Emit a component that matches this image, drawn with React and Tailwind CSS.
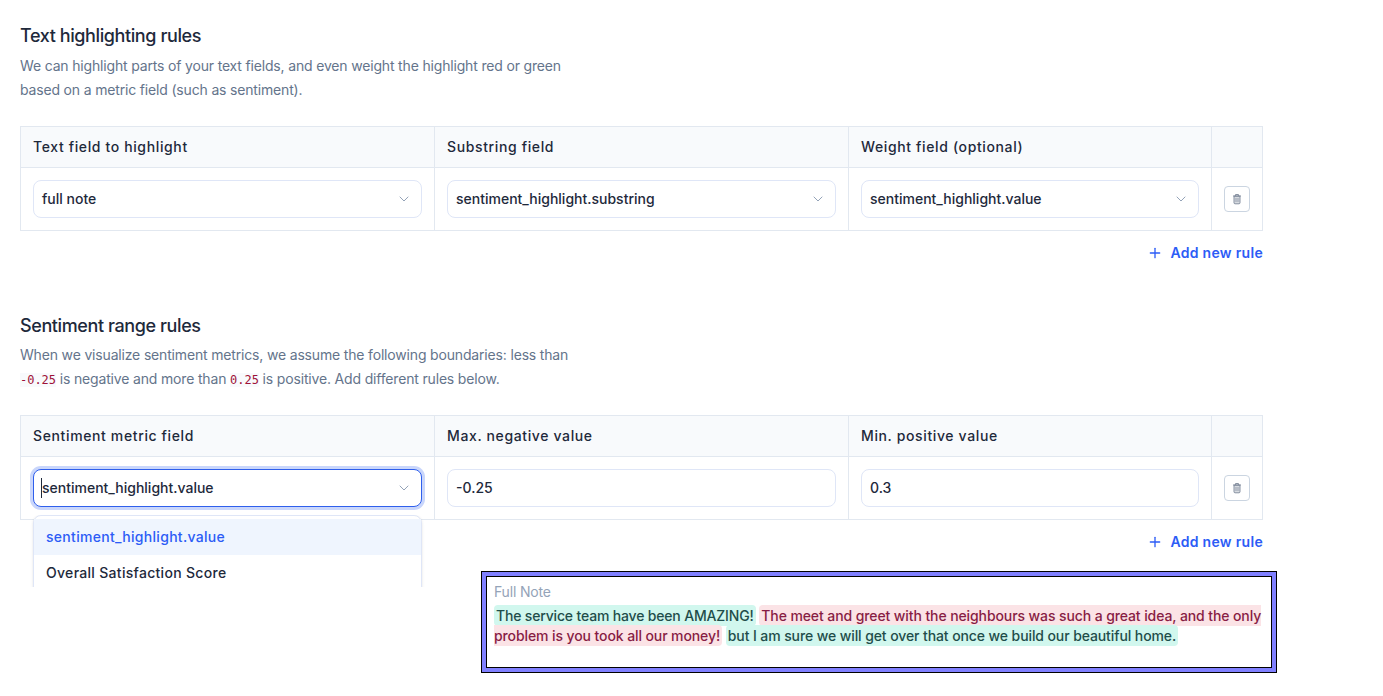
import React from 'react'
import { ChevronDown, Plus } from 'lucide-react'

function Header({ children, last }) {
  return (
    <div className={`h-[41px] flex items-center px-3 text-sm font-medium tracking-[0.63px] text-[#1e293b] bg-[#f8fafc] border-b border-[#e2e8f0] ${last ? '' : 'border-r'}`}>
      {children}
    </div>
  )
}

function Cell({ children, last }) {
  return (
    <div className={`h-[62px] flex items-center px-3 border-[#e2e8f0] ${last ? 'justify-center' : 'border-r'}`}>
      {children}
    </div>
  )
}

function Select({ value, focused }) {
  return (
    <div className={`w-full h-[38px] flex items-center justify-between pl-2 pr-[9px] rounded-lg bg-white text-sm font-medium text-[#1e293b] border ${focused ? 'border-[#2f5fec] ring-[3px] ring-[#c9d6fb]' : 'border-[#dfe6f7]'}`}>
      <span className={focused ? 'border-l border-[#1e293b] -ml-px' : ''}>{value}</span>
      <ChevronDown size={16} strokeWidth={1.5} className="text-[#94a3b8]" />
    </div>
  )
}

function Input({ value }) {
  return (
    <div className="w-full h-[38px] flex items-center pl-2 rounded-lg bg-white text-sm font-medium text-[#1e293b] border border-[#dfe6f7]">
      {value}
    </div>
  )
}

function TrashIcon() {
  return (
    <svg width="12" height="12" viewBox="0 0 12 12" fill="none">
      <path d="M2 3h8" stroke="currentColor" strokeWidth="1" />
      <path d="M4.5 2.8V1.6h3v1.2" stroke="currentColor" strokeWidth="1" />
      <path d="M3 3.2h6v6.6c0 .6-.4 1-1 1H4c-.6 0-1-.4-1-1V3.2z" fill="currentColor" fillOpacity="0.3" stroke="currentColor" strokeWidth="0.9" />
      <path d="M5 5v4M7 5v4" stroke="currentColor" strokeWidth="0.7" />
    </svg>
  )
}

function DeleteButton() {
  return (
    <button className="w-[26px] h-[26px] flex items-center justify-center rounded border border-[#cbd5e1] bg-white text-[#7c8798]">
      <TrashIcon />
    </button>
  )
}

function RuleTable({ headers, cells, children }) {
  return (
    <div className="relative">
      <div className="grid grid-cols-[414px_414px_363px_1fr] border border-[#e2e8f0]">
        {headers.map((h, i) => <Header key={i} last={i === 3}>{h}</Header>)}
        {cells.map((c, i) => <Cell key={i}>{c}</Cell>)}
        <Cell last><DeleteButton /></Cell>
      </div>
      {children}
      <div className="h-[44px] flex items-center justify-end gap-[7px] text-sm font-semibold tracking-[0.3px] text-[#2c5cf6]">
        <Plus size={16} />
        Add new rule
      </div>
    </div>
  )
}

function Code({ children }) {
  return <code className="font-['DejaVu_Sans_Mono',monospace] text-xs tracking-[-0.02px] text-[#9f1239] bg-[#f8fafc]">{children}</code>
}

function Mark({ green, tight, children }) {
  return (
    <span className={`px-0.5 rounded-sm py-[2px] ${tight ? 'tracking-[-0.17px]' : 'tracking-[-0.1px]'} ${green ? 'bg-[#d1f7ee] text-[#1f4d4a]' : 'bg-[#fbe3e6] text-[#881d44]'}`}>
      {children}
    </span>
  )
}

export default function App() {
  return (
    <div className="relative w-[1383px] h-[696px] overflow-hidden bg-white font-['Inter',sans-serif]">
      <div className="w-[1243px] ml-5 pt-[25px]">
        <h2 className="text-lg leading-[21px] font-medium tracking-[-0.4px] text-[#1e293b]">Text highlighting rules</h2>
        <p className="mt-2 w-[560px] text-sm leading-6 tracking-[-0.17px] text-[#64748b]">
          We can highlight parts of your text fields, and even weight the highlight red or green based on a metric field (such as sentiment).
        </p>
        <div className="mt-6">
          <RuleTable
            headers={['Text field to highlight', 'Substring field', 'Weight field (optional)', '']}
            cells={[
              <Select value="full note" />,
              <Select value="sentiment_highlight.substring" />,
              <Select value="sentiment_highlight.value" />,
            ]}
          />
        </div>

        <h2 className="mt-10 text-lg leading-[21px] font-medium tracking-[-0.4px] text-[#1e293b]">Sentiment range rules</h2>
        <p className="mt-[7px] w-[560px] text-sm leading-6 tracking-[-0.17px] text-[#64748b]">
          When we visualize sentiment metrics, we assume the following boundaries: less than <Code>-0.25</Code> is negative and more than <Code>0.25</Code> is positive. Add different rules below.
        </p>
        <div className="mt-6">
          <RuleTable
            headers={['Sentiment metric field', 'Max. negative value', 'Min. positive value', '']}
            cells={[
              <Select value="sentiment_highlight.value" focused />,
              <Input value="-0.25" />,
              <Input value="0.3" />,
            ]}
          >
            <div className="absolute left-[9px] top-[100px] w-[397px] h-[72px] overflow-hidden px-1">
              <div className="h-[100px] rounded-lg border border-[#dfe6f7] bg-white text-sm font-medium tracking-[0.3px] shadow-sm">
                <div className="mt-[3px] h-9 flex items-center px-3 bg-[#eff5fe] text-[#2c5cf6]">sentiment_highlight.value</div>
                <div className="h-9 flex items-center px-3 text-[#1e293b]">Overall Satisfaction Score</div>
              </div>
            </div>
          </RuleTable>
        </div>
      </div>

      <div className="absolute left-[481px] top-[571px] w-[796px] h-[102px] border border-black bg-[#8080ff] p-1">
        <div className="h-full border border-black bg-white px-[7px] pt-[5px]">
          <div className="text-sm leading-5 tracking-[-0.18px] text-[#94a3b8]">Full Note</div>
          <div className="mt-1 text-sm leading-5 font-[450]">
            <Mark green tight>The service team have been AMAZING!</Mark>{' '}
            <Mark>The meet and greet with the neighbours was such a great idea, and the only problem is you took all our money!</Mark>{' '}
            <Mark green>but I am sure we will get over that once we build our beautiful home.</Mark>
          </div>
        </div>
      </div>
    </div>
  )
}
